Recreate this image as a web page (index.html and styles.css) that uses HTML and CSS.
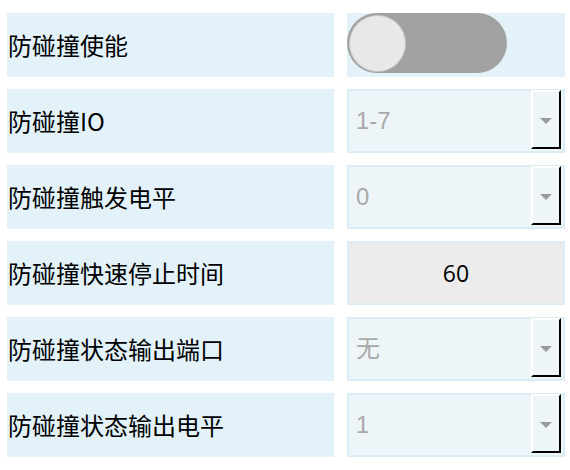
FILE: index.html
```html
<!DOCTYPE html>
<html lang="zh-CN">
<head>
<meta charset="utf-8">
<link rel="stylesheet" href="styles.css">
</head>
<body>
<div class="form">
  <div class="label">防碰撞使能</div>
  <div class="field field-switch">
    <div class="switch"><span class="knob"></span></div>
  </div>

  <div class="label">防碰撞IO</div>
  <div class="field select"><span class="value">1-7</span><span class="btn"><span class="arrow"></span></span></div>

  <div class="label">防碰撞触发电平</div>
  <div class="field select"><span class="value">0</span><span class="btn"><span class="arrow"></span></span></div>

  <div class="label">防碰撞快速停止时间</div>
  <div class="field input"><span class="num">60</span></div>

  <div class="label">防碰撞状态输出端口</div>
  <div class="field select"><span class="value">无</span><span class="btn"><span class="arrow"></span></span></div>

  <div class="label">防碰撞状态输出电平</div>
  <div class="field select"><span class="value">1</span><span class="btn"><span class="arrow"></span></span></div>
</div>
</body>
</html>
```
FILE: styles.css
```css
html, body {
  margin: 0;
  padding: 0;
  background: #ffffff;
}
body {
  font-family: "Liberation Sans", "Noto Sans CJK SC", sans-serif;
  font-size: 24px;
}
.form {
  display: grid;
  grid-template-columns: 327px 218px;
  grid-auto-rows: 64px;
  column-gap: 13px;
  row-gap: 12px;
  padding: 13px 0 0 7px;
}
.label {
  background: #e3f2f8;
  display: flex;
  align-items: center;
  padding-left: 1px;
  color: #000;
  font-family: "Noto Sans CJK SC", sans-serif;
  line-height: 1;
}
.field {
  position: relative;
  box-sizing: border-box;
  display: flex;
  align-items: center;
}
.field-switch {
  background: #e3f2f8;
  align-items: flex-start;
}
.switch {
  width: 160px;
  height: 60px;
  border-radius: 30px;
  background: #a1a1a1;
  position: relative;
  display: flex;
  align-items: center;
  padding-left: 3px;
  box-sizing: border-box;
}
.knob {
  width: 55px;
  height: 55px;
  border-radius: 50%;
  background: #e8e8e8;
  box-shadow: 0 0 0 1px #c8c8c8;
}
.select {
  background: #eef5f8;
  border: 2px solid #dbeef6;
  padding-left: 7px;
}
.value {
  color: #a9a9a9;
  font-family: "Liberation Sans", "Noto Sans CJK SC", sans-serif;
  line-height: 1;
}
.btn {
  position: absolute;
  right: 2px;
  top: -1px;
  width: 30px;
  height: 59px;
  box-sizing: border-box;
  border-top: 2px solid #ffffff;
  border-left: 2px solid #ffffff;
  border-right: 2px solid #000000;
  border-bottom: 2px solid #000000;
  background: #eef5f8;
  display: flex;
  align-items: center;
  justify-content: center;
}
.arrow {
  width: 0;
  height: 0;
  border-left: 6px solid transparent;
  border-right: 6px solid transparent;
  border-top: 6px solid #9a9a9a;
  margin-top: 2px;
}
.input {
  background: #ececec;
  border: 2px solid #dbeef6;
  justify-content: center;
}
.num {
  color: #000;
  font-family: "Open Sans", "Liberation Sans", sans-serif;
  font-size: 23px;
  line-height: 1;
}
```
